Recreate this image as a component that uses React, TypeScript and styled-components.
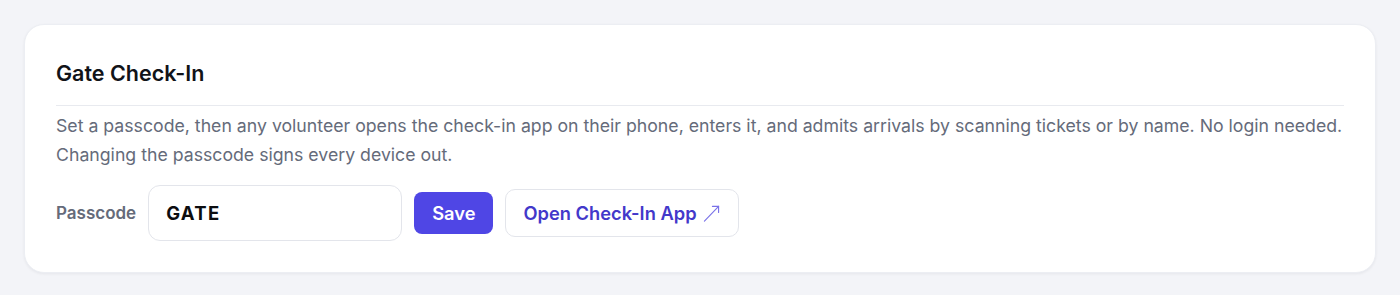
import React from "react";
import styled, { createGlobalStyle } from "styled-components";

const Global = createGlobalStyle`
  html, body { margin: 0; padding: 0; background: #f3f4f8; }
  body { font-family: Inter, "Noto Sans", sans-serif; -webkit-font-smoothing: antialiased; }
  * { box-sizing: border-box; }
`;

const Page = styled.div`
  padding: 24px;
`;

const Card = styled.section`
  background: #ffffff;
  border: 1px solid #eceef3;
  border-radius: 20px;
  box-shadow: 0 1px 3px rgba(16, 24, 40, 0.06);
  padding: 33px 31px 31px;
`;

const Title = styled.h2`
  margin: 0;
  font-size: 21.5px;
  font-weight: 600;
  color: #111318;
  line-height: 30px;
  padding-bottom: 17px;
  border-bottom: 1px solid #e8eaef;
`;

const Desc = styled.p`
  margin: 5px 0 16px;
  font-size: 17.7px;
  line-height: 29px;
  color: #656b7a;
`;

const Row = styled.div`
  display: flex;
  align-items: center;
  gap: 12px;
`;

const Label = styled.label`
  font-size: 17px;
  font-weight: 600;
  color: #656b7a;
`;

const Input = styled.input`
  width: 254px;
  height: 56px;
  border: 1px solid #e3e5eb;
  border-radius: 12px;
  padding: 0 17px;
  font-family: Inter, sans-serif;
  font-size: 18.5px;
  font-weight: 700;
  letter-spacing: 1.3px;
  color: #0c0d10;
  background: #fff;
  outline: none;
`;

const Button = styled.button<{ $variant?: "primary" | "outline" }>`
  font-family: Inter, sans-serif;
  font-size: 18.3px;
  font-weight: 600;
  border-radius: ${(p) => (p.$variant === "primary" ? "8px" : "10px")};
  cursor: pointer;
  display: inline-flex;
  align-items: center;
  gap: 6px;
  ${(p) =>
    p.$variant === "primary"
      ? `background: #4f46e5; color: #fff; border: none; height: 42px; padding: 0 18px;`
      : `background: #fff; color: #4338ca; border: 1px solid #e3e5eb; height: 48px; padding: 0 18px 0 17px;`}
`;

export default function App() {
  return (
    <>
      <Global />
      <Page>
        <Card>
          <Title>Gate Check-In</Title>
          <Desc>
            Set a passcode, then any volunteer opens the check-in app on their phone, enters it, and admits arrivals by
            scanning tickets or by name. No login needed. Changing the passcode signs every device out.
          </Desc>
          <Row>
            <Label htmlFor="pc">Passcode</Label>
            <Input id="pc" defaultValue="GATE" />
            <Button $variant="primary">Save</Button>
            <Button $variant="outline">
              Open Check-In App
              <svg width="17" height="17" viewBox="0 0 18 18" fill="none" stroke="#7a72e8" strokeWidth="1.2" strokeLinecap="round">
                <path d="M1.5 17 L16.5 1.5" />
                <path d="M10 1.5 H16.5 V8" />
              </svg>
            </Button>
          </Row>
        </Card>
      </Page>
    </>
  );
}
